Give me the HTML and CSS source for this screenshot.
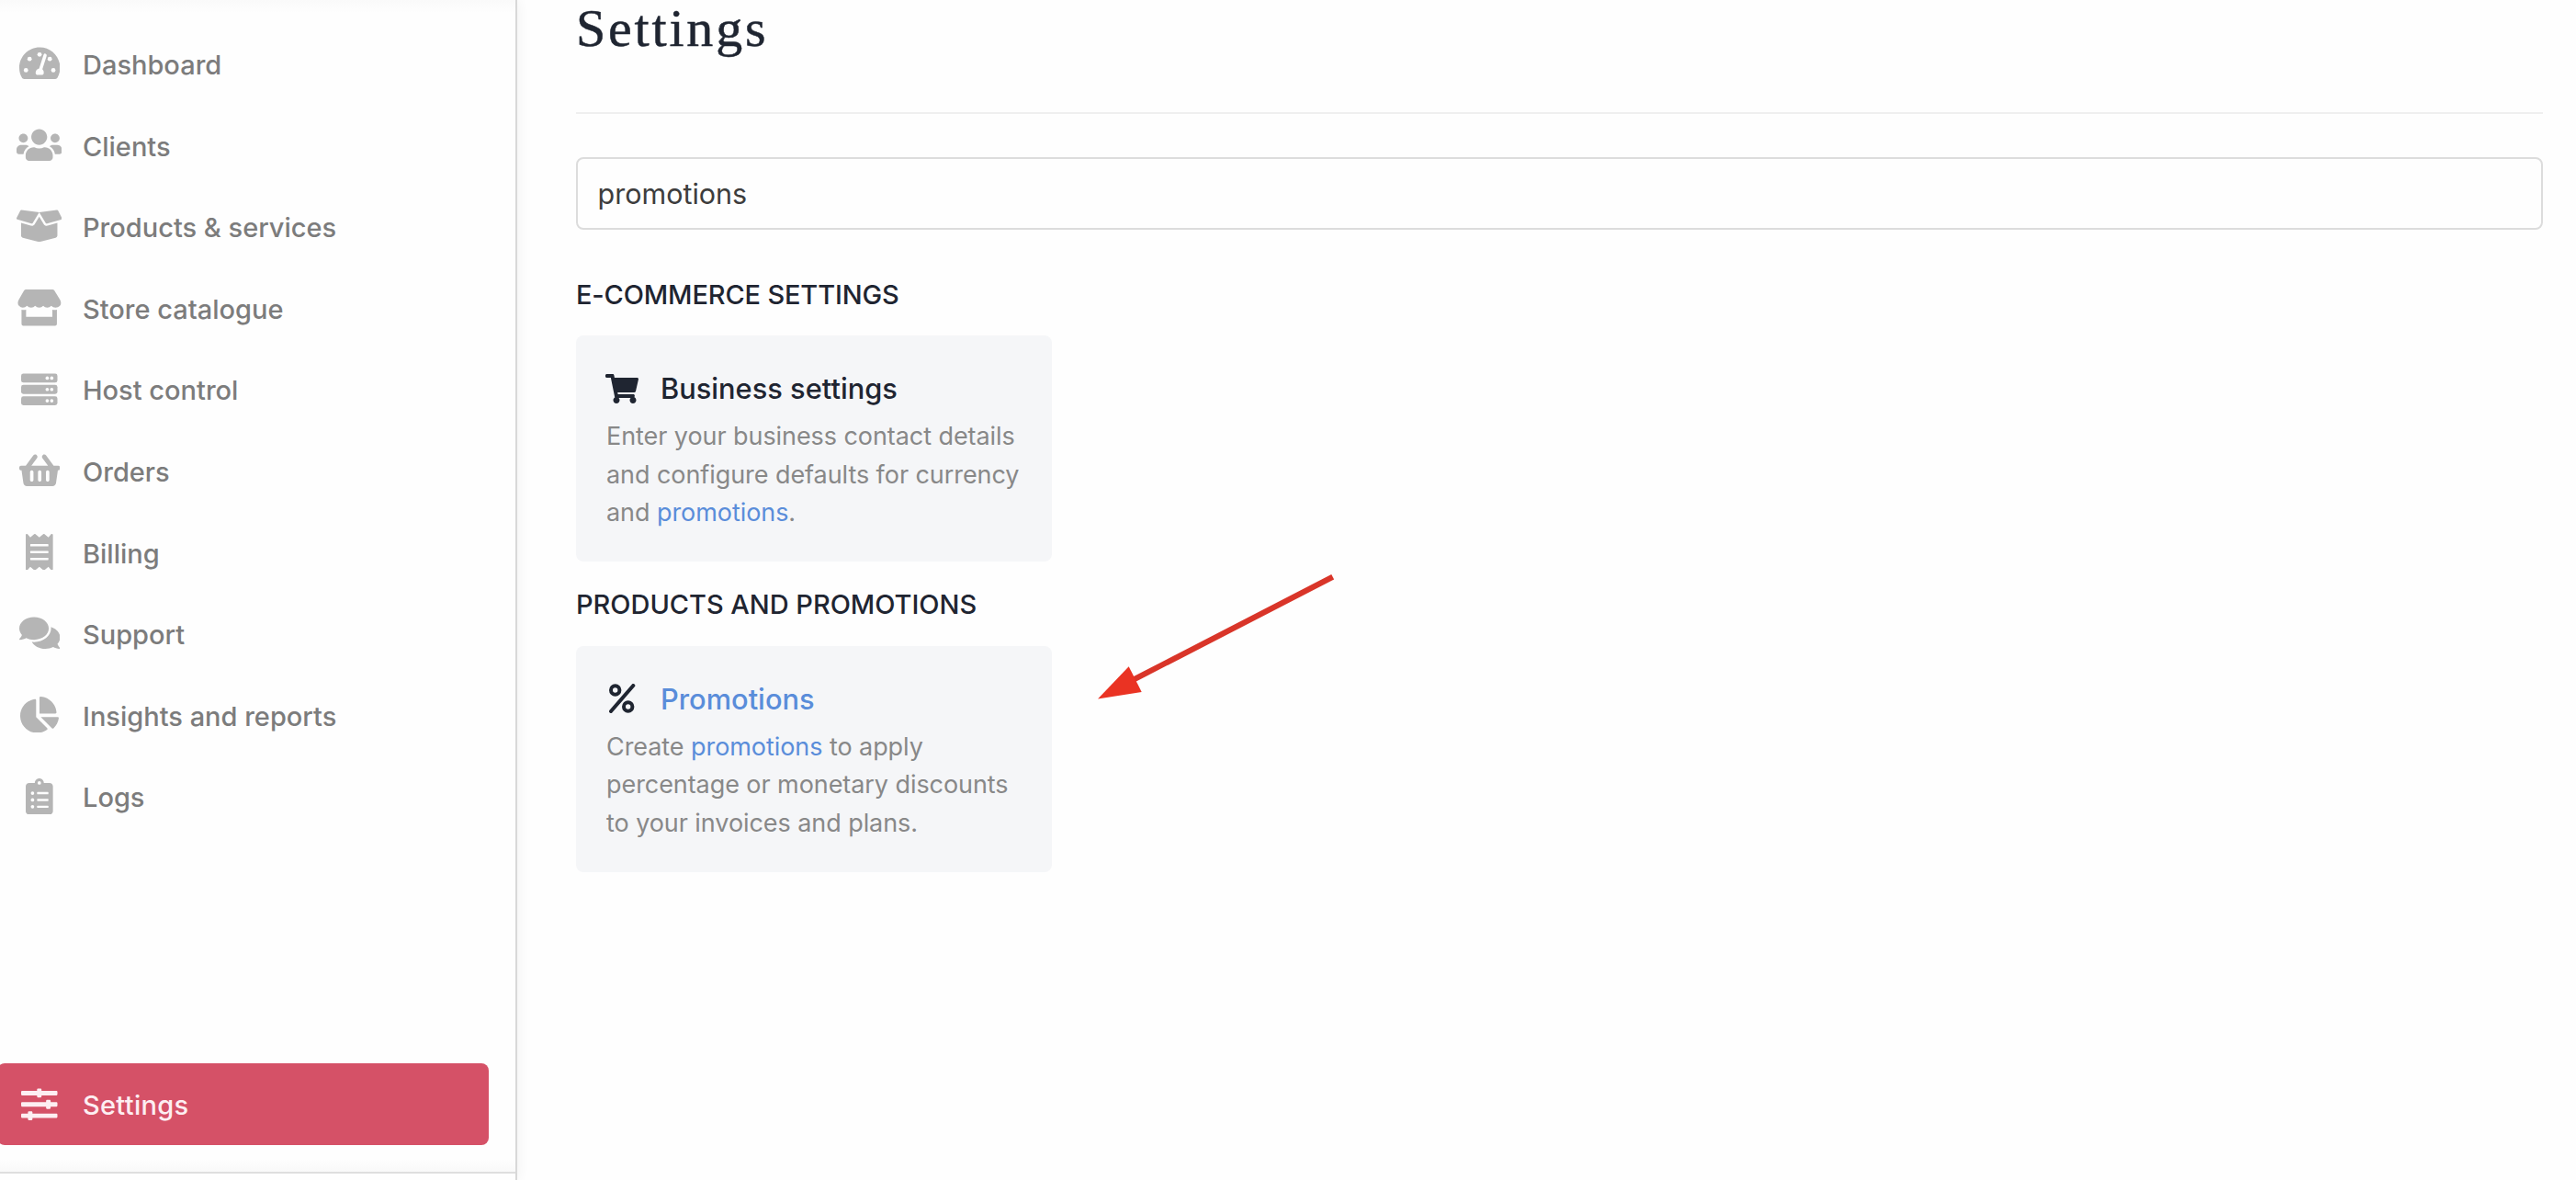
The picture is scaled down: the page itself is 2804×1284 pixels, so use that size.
FILE: index.html
```
<!DOCTYPE html>
<html lang="en">
<head>
<meta charset="utf-8">
<title>Settings</title>
<link rel="stylesheet" href="styles.css">
</head>
<body>
<div class="app">
  <aside class="sidebar">
    <nav class="nav">
      <a class="nav-item">
        <span class="nav-icon"><svg viewBox="0 0 576 512"><path d="M288 32C128.940 32 0 160.940 0 320c0 52.800 14.250 102.260 39.060 144.800 5.610 9.620 16.300 15.200 27.440 15.200h443c11.140 0 21.830-5.580 27.440-15.200C561.750 422.260 576 372.800 576 320c0-159.060-128.940-288-288-288z"/><g class="cutout"><circle cx="145" cy="197" r="31"/><circle cx="286" cy="134" r="31"/><circle cx="430" cy="197" r="31"/><circle cx="94" cy="356" r="31"/><circle cx="480" cy="356" r="31"/><path d="M342 138q8-22 28-16 22 8 16 30l-60 188q24 22 20 54-2 22-18 26H248q-16-4-18-26 0-48 50-64z"/></g></svg></span>
        <span class="nav-label">Dashboard</span>
      </a>
      <a class="nav-item">
        <span class="nav-icon"><svg viewBox="0 0 640 512"><path d="M96 224c35.300 0 64-28.700 64-64s-28.700-64-64-64-64 28.700-64 64 28.700 64 64 64zm448 0c35.300 0 64-28.700 64-64s-28.700-64-64-64-64 28.700-64 64 28.700 64 64 64zm32 32h-64c-17.600 0-33.500 7.100-45.100 18.600 40.300 22.100 68.900 62 75.100 109.400h66c17.700 0 32-14.300 32-32v-32c0-35.300-28.700-64-64-64zm-256 0c61.900 0 112-50.100 112-112S381.900 32 320 32 208 82.100 208 144s50.100 112 112 112zm76.800 32h-8.300c-20.800 10-43.900 16-68.500 16s-47.600-6-68.500-16h-8.300C179.600 288 128 339.600 128 403.200V432c0 26.500 21.500 48 48 48h288c26.500 0 48-21.500 48-48v-28.800c0-63.600-51.600-115.200-115.200-115.200zm-223.700-13.400C161.500 263.100 145.600 256 128 256H64c-35.300 0-64 28.700-64 64v32c0 17.700 14.300 32 32 32h65.900c6.300-47.400 34.900-87.300 75.200-109.400z"/></svg></span>
        <span class="nav-label">Clients</span>
      </a>
      <a class="nav-item">
        <span class="nav-icon"><svg viewBox="0 0 640 512"><path d="M425.700 256c-16.900 0-32.800-9-41.400-23.400L320 126l-64.200 106.600c-8.700 14.500-24.600 23.500-41.500 23.500-4.500 0-9-.6-13.300-1.900L64 215v178c0 14.700 10 27.500 24.200 31l216.200 54.100c10.200 2.500 20.900 2.500 31 0L551.800 424c14.200-3.600 24.200-16.400 24.200-31V215l-137 39.100c-4.300 1.300-8.800 1.900-13.300 1.900zm212.600-112.200L586.800 41c-3.100-6.200-9.800-9.800-16.700-8.900L320 64l91.700 152.100c3.800 6.300 11.400 9.300 18.500 7.300l197.900-56.500c9.900-2.900 14.700-13.900 10.200-23.100zM53.200 41L1.700 143.800c-4.600 9.200.3 20.200 10.100 23l197.900 56.500c7.100 2 14.700-1 18.500-7.300L320 64 69.800 32.100c-6.900-.8-13.500 2.700-16.600 8.900z"/></svg></span>
        <span class="nav-label">Products &amp; services</span>
      </a>
      <a class="nav-item">
        <span class="nav-icon"><svg viewBox="0 0 50 40"><path d="M10.500 0h29q1.500 0 2.300 1.200L48 11.500q2 4-.2 6.600-1.800 2-4.800 2-3 0-4.700-2-1.800 2-4.500 2-2.700 0-4.400-2-1.800 2-4.400 2-2.700 0-4.500-2-1.700 2-4.400 2-2.800 0-4.600-2-1.800 2-4.600 2-2.400 0-4.200-2-2.300-2.600-.3-6.600L8.200 1.200Q9 0 10.500 0zM5.500 22.300q2.500.4 5 0V30h29v-7.700q2.500.4 5 0V38q0 2-2 2h-35q-2 0-2-2z"/></svg></span>
        <span class="nav-label">Store catalogue</span>
      </a>
      <a class="nav-item">
        <span class="nav-icon"><svg viewBox="0 0 512 512"><g><rect y="32" width="512" height="128" rx="32"/><rect y="192" width="512" height="128" rx="32"/><rect y="352" width="512" height="128" rx="32"/></g><g class="cutout"><circle cx="368" cy="96" r="24"/><circle cx="432" cy="96" r="24"/><circle cx="368" cy="256" r="24"/><circle cx="432" cy="256" r="24"/><circle cx="368" cy="416" r="24"/><circle cx="432" cy="416" r="24"/></g></svg></span>
        <span class="nav-label">Host control</span>
      </a>
      <a class="nav-item">
        <span class="nav-icon"><svg viewBox="0 0 576 512"><path d="M576 216v16c0 13.255-10.745 24-24 24h-8l-26.113 182.788C514.509 462.435 494.257 480 470.370 480H105.630c-23.887 0-44.139-17.565-47.518-41.212L32 256h-8c-13.255 0-24-10.745-24-24v-16c0-13.255 10.745-24 24-24h67.341l106.780-146.821c10.395-14.292 30.407-17.453 44.701-7.058 14.293 10.395 17.453 30.408 7.058 44.701L170.477 192h235.046L326.120 82.821c-10.395-14.292-7.234-34.306 7.059-44.701 14.291-10.395 34.306-7.235 44.701 7.058L484.659 192H552c13.255 0 24 10.745 24 24zM312 392V280c0-13.255-10.745-24-24-24s-24 10.745-24 24v112c0 13.255 10.745 24 24 24s24-10.745 24-24zm112 0V280c0-13.255-10.745-24-24-24s-24 10.745-24 24v112c0 13.255 10.745 24 24 24s24-10.745 24-24zm-224 0V280c0-13.255-10.745-24-24-24s-24 10.745-24 24v112c0 13.255 10.745 24 24 24s24-10.745 24-24z"/></svg></span>
        <span class="nav-label">Orders</span>
      </a>
      <a class="nav-item">
        <span class="nav-icon"><svg viewBox="0 0 384 512"><path d="M358.400 3.200L320 48 265.600 3.200a15.900 15.900 0 0 0-19.200 0L192 48 137.600 3.200a15.900 15.900 0 0 0-19.200 0L64 48 25.600 3.200C15-4.700 0 2.800 0 16v480c0 13.200 15 20.700 25.600 12.800L64 464l54.400 44.800a15.900 15.900 0 0 0 19.200 0L192 464l54.400 44.800a15.900 15.900 0 0 0 19.200 0L320 464l38.400 44.800c10.500 7.900 25.600.4 25.600-12.800V16c0-13.200-15-20.700-25.600-12.800z"/><g class="cutout"><rect x="64" y="144" width="256" height="32" rx="8"/><rect x="64" y="240" width="256" height="32" rx="8"/><rect x="64" y="336" width="256" height="32" rx="8"/></g></svg></span>
        <span class="nav-label">Billing</span>
      </a>
      <a class="nav-item">
        <span class="nav-icon"><svg viewBox="0 0 576 512"><path d="M416 192c0-88.400-93.100-160-208-160S0 103.600 0 192c0 34.300 14.100 65.900 38 92-13.400 30.200-35.500 54.200-35.800 54.500-2.200 2.300-2.800 5.700-1.500 8.700S4.800 352 8 352c36.600 0 66.900-12.300 88.700-25 32.200 15.700 70.300 25 111.300 25 114.900 0 208-71.600 208-160zm122 220c23.900-26 38-57.700 38-92 0-66.900-53.500-124.200-129.300-148.100.9 6.600 1.300 13.300 1.300 20.100 0 105.900-107.700 192-240 192-10.800 0-21.300-.8-31.700-1.900C207.800 439.600 281.800 480 368 480c41 0 79.100-9.200 111.300-25 21.800 12.700 52.100 25 88.700 25 3.200 0 6.100-1.900 7.300-4.800 1.300-2.900.7-6.300-1.500-8.700-.3-.3-22.400-24.200-35.800-54.500z"/></svg></span>
        <span class="nav-label">Support</span>
      </a>
      <a class="nav-item">
        <span class="nav-icon"><svg viewBox="0 0 544 512"><path d="M527.790 288H290.500l158.030 158.030c6.040 6.040 15.980 6.530 22.190.680 38.700-36.460 65.320-85.610 73.130-140.860 1.340-9.460-6.510-17.850-16.060-17.850zm-15.830-64.800C503.720 103.740 408.260 8.280 288.800.040 279.680-.590 272 7.100 272 16.240V240h223.770c9.140 0 16.820-7.680 16.190-16.800zM224 288V50.710c0-9.550-8.390-17.400-17.840-16.060C86.990 51.490-4.100 155.600.140 280.370 4.500 408.510 114.830 513.590 243.030 511.980c50.400-.63 96.970-16.870 135.260-44.030 7.900-5.600 8.420-17.230 1.570-24.080L224 288z"/></svg></span>
        <span class="nav-label">Insights and reports</span>
      </a>
      <a class="nav-item">
        <span class="nav-icon"><svg viewBox="0 0 384 512"><path d="M336 64h-80c0-35.300-28.700-64-64-64s-64 28.700-64 64H48C21.500 64 0 85.500 0 112v352c0 26.500 21.500 48 48 48h288c26.500 0 48-21.500 48-48V112c0-26.500-21.500-48-48-48z"/><g class="cutout"><circle cx="192" cy="64" r="24"/><circle cx="96" cy="208" r="24"/><circle cx="96" cy="304" r="24"/><circle cx="96" cy="400" r="24"/><rect x="160" y="192" width="160" height="32" rx="8"/><rect x="160" y="288" width="160" height="32" rx="8"/><rect x="160" y="384" width="160" height="32" rx="8"/></g></svg></span>
        <span class="nav-label">Logs</span>
      </a>
    </nav>
    <div class="nav-footer">
      <a class="nav-item nav-item--active">
        <span class="nav-icon"><svg viewBox="0 0 512 512"><path d="M496 384H160v-16c0-8.800-7.200-16-16-16h-32c-8.800 0-16 7.200-16 16v16H16c-8.800 0-16 7.200-16 16v32c0 8.800 7.200 16 16 16h80v16c0 8.800 7.200 16 16 16h32c8.800 0 16-7.200 16-16v-16h336c8.800 0 16-7.200 16-16v-32c0-8.800-7.200-16-16-16zm0-160h-80v-16c0-8.800-7.200-16-16-16h-32c-8.800 0-16 7.200-16 16v16H16c-8.800 0-16 7.200-16 16v32c0 8.800 7.200 16 16 16h336v16c0 8.800 7.200 16 16 16h32c8.800 0 16-7.200 16-16v-16h80c8.800 0 16-7.200 16-16v-32c0-8.800-7.200-16-16-16zm0-160H288V48c0-8.800-7.200-16-16-16h-32c-8.800 0-16 7.200-16 16v16H16C7.200 64 0 71.200 0 80v32c0 8.800 7.200 16 16 16h208v16c0 8.800 7.200 16 16 16h32c8.800 0 16-7.200 16-16v-16h208c8.800 0 16-7.200 16-16V80c0-8.800-7.200-16-16-16z"/></svg></span>
        <span class="nav-label">Settings</span>
      </a>
    </div>
  </aside>

  <main class="content">
    <header class="page-header"><h1>Settings</h1></header>
    <input class="search" type="text" value="promotions">

    <h2>E-COMMERCE SETTINGS</h2>
    <section class="card">
      <h3 class="card-title">
        <svg class="card-icon" viewBox="0 0 576 512"><path d="M528.120 301.319l47.273-208C578.806 78.301 567.391 64 551.990 64H159.208l-9.166-44.810C147.758 8.021 137.930 0 126.529 0H24C10.745 0 0 10.745 0 24v16c0 13.255 10.745 24 24 24h69.883l70.248 343.435C147.325 417.100 136 435.222 136 456c0 30.928 25.072 56 56 56s56-25.072 56-56c0-15.674-6.447-29.835-16.824-40h209.647C430.447 426.165 424 440.326 424 456c0 30.928 25.072 56 56 56s56-25.072 56-56c0-22.172-12.888-41.332-31.579-50.405l5.517-24.276c3.413-15.018-8.002-29.319-23.403-29.319H218.117l-6.545-32h293.145c11.206 0 20.920-7.754 23.403-18.681z"/></svg>
        <span>Business settings</span>
      </h3>
      <p>Enter your business contact details<br>and configure defaults for currency<br>and <mark>promotions</mark>.</p>
    </section>

    <h2>PRODUCTS AND PROMOTIONS</h2>
    <section class="card">
      <h3 class="card-title">
        <svg class="card-icon card-icon--line" viewBox="0 0 36 32"><circle cx="10.700" cy="7" r="4.700"/><circle cx="24.700" cy="25" r="4.700"/><path d="M30.300 2L6 30"/></svg>
        <span><mark>Promotions</mark></span>
      </h3>
      <p>Create <mark>promotions</mark> to apply<br>percentage or monetary discounts<br>to your invoices and plans.</p>
    </section>
  </main>

  <svg class="callout-arrow" viewBox="0 0 258 138"><path class="shaft" d="M255.700 5.700L38 118"/><path class="head" d="M0 138.500L33.700 103.300 47.700 131z"/></svg>
</div>
</body>
</html>
```
FILE: styles.css
```
* { box-sizing: border-box; }

body {
  margin: 0;
  background: #fefefe;
  color: #1f2531;
  font-family: Inter, "Liberation Sans", sans-serif;
}

.app {
  position: relative;
  display: flex;
  height: 1284px;
  overflow: hidden;
}

/* Sidebar */
.sidebar {
  display: flex;
  flex-direction: column;
  flex: none;
  width: 563px;
  padding: 24.700px 0 7px;
  border-right: 2px solid #d8d8d8;
  background: linear-gradient(#fafafa, #fefefe 14px);
  box-shadow: 0 0 14px rgba(0, 0, 0, .06);
}

.nav-item {
  display: flex;
  align-items: center;
  gap: 22.500px;
  height: 88.600px;
  padding-left: 18.100px;
  color: #7c7c7c;
  font-size: 29px;
  font-weight: 500;
}

.nav-icon {
  display: flex;
  justify-content: center;
  width: 49.400px;
}

.nav-icon svg {
  display: block;
  height: 39.500px;
  fill: #b5b5b5;
}

.nav-icon .cutout { fill: #fefefe; }

.nav-label { padding-top: 3px; }

.nav-footer {
  margin-top: auto;
  padding: 20px 29.500px 29.300px 0;
  border-bottom: 2px solid #dedede;
  background: linear-gradient(to top, #f9f9f9, #fefefe 14px);
}

.nav-item--active {
  margin-left: -3px;
  padding-left: 21.100px;
  border-radius: 8px;
  background: #d55167;
  color: #fdeef2;
  letter-spacing: .3px;
}

.nav-item--active svg { fill: #fdeef2; }

/* Main column */
.content {
  flex: 1;
  padding: 0 36px 0 64px;
}

.page-header {
  height: 124px;
  border-bottom: 2px solid #efefef;
}

h1 {
  margin: 0;
  font: 400 58px/61px "Liberation Serif", serif;
  letter-spacing: 2.800px;
  color: #1f2531;
  -webkit-text-stroke: .5px #1f2531;
}

.search {
  display: block;
  width: 100%;
  height: 79px;
  margin-top: 47px;
  padding: 0 21.500px;
  border: 2px solid #dcdcdc;
  border-radius: 8px;
  background: #fefefe;
  color: #3d3d3d;
  font: 400 30.500px Inter, "Liberation Sans", sans-serif;
  outline: none;
}

h2 {
  margin: 25.400px 0 22.300px;
  font-size: 29px;
  font-weight: 500;
  line-height: 44px;
  letter-spacing: -.04px;
}

.search + h2 {
  margin: 48.500px 0 22.500px;
  letter-spacing: -.15px;
}

/* Cards */
.card {
  width: 517.600px;
  height: 246px;
  padding: 33px 32px 33px 33px;
  border-radius: 8px;
  background: #f5f6f8;
}

.card-title {
  display: flex;
  align-items: center;
  gap: 24.500px;
  height: 49.600px;
  margin: 0 0 6.800px;
  font-size: 30.800px;
  font-weight: 500;
}

.card-icon {
  width: 36px;
  height: 32px;
  margin-left: -1.500px;
  fill: #1f2531;
}

.card-icon--line {
  fill: none;
  stroke: #1f2531;
  stroke-width: 4;
  stroke-linecap: round;
}

.card p {
  margin: 0;
  color: #888;
  font-size: 27px;
  line-height: 41.400px;
  letter-spacing: -.07px;
  white-space: nowrap;
}

mark {
  background: none;
  color: #5a8dda;
}

/* Annotation arrow, drawn over the page */
.callout-arrow {
  position: absolute;
  left: 1195px;
  top: 622px;
  width: 258px;
  height: 138px;
  overflow: visible;
}

.callout-arrow .shaft {
  stroke: #d93529;
  stroke-width: 6.200;
}

.callout-arrow .head { fill: #ea3323; }
```
